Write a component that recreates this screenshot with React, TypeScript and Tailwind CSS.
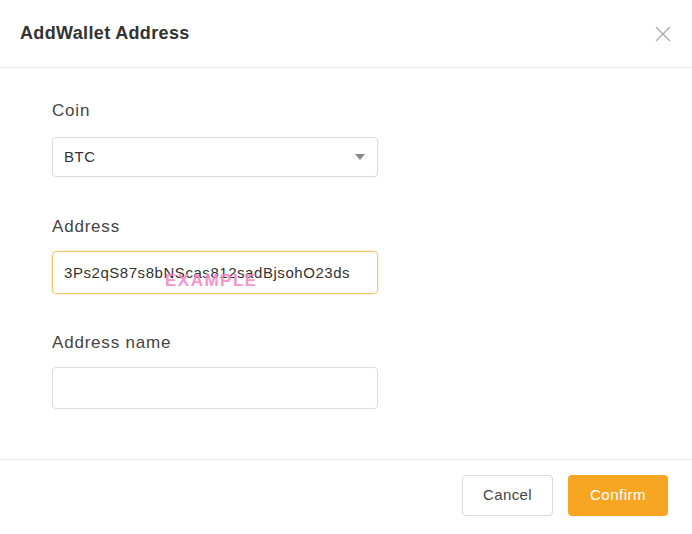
import React, { useState } from "react";

const App = () => {
  const [coin] = useState("BTC");
  const [address, setAddress] = useState("3Ps2qS87s8bNScas812sadBjsohO23ds");
  const [name, setName] = useState("");

  return (
    <div className="w-[692px] h-[534px] bg-white flex flex-col font-['Liberation_Sans',Arial,sans-serif] text-[#333]">
      {/* header */}
      <div className="h-[68px] flex items-center justify-between pl-5 pr-[21px] border-b border-[#e8e8e8]">
        <h2 className="text-[18px] font-bold tracking-[0.35px] text-[#333]">AddWallet Address</h2>
        <button type="button" className="text-[#aaa]">
          <svg width="16" height="16" viewBox="0 0 16 16" fill="none" stroke="currentColor" strokeWidth="1.3">
            <path d="M1 1 L15 15 M15 1 L1 15" />
          </svg>
        </button>
      </div>

      {/* body */}
      <div className="flex-1 pt-[31px] pl-[52px]">
        <label className="block text-[17px] tracking-[0.8px] leading-6 text-[#444] mb-[14px]">Coin</label>
        <div className="relative w-[326px] h-[40px] border border-[#dcdcdc] rounded-[4px] flex items-center pl-[11px] shadow-[0_1px_2px_rgba(0,0,0,0.05)]">
          <span className="text-[15px] tracking-[0.6px] text-[#333]">{coin}</span>
          <svg className="absolute right-[12px] top-[16px]" width="10" height="7" viewBox="0 0 10 7">
            <path d="M0 0 H10 L5 6 Z" fill="#8a8a8a" />
          </svg>
        </div>

        <label className="block text-[17px] tracking-[0.8px] leading-6 text-[#444] mt-[38px] mb-[12px]">Address</label>
        <div className="relative w-[326px]">
          <input
            value={address}
            onChange={(e) => setAddress(e.target.value)}
            className="w-full h-[43px] border border-[#f2c56a] rounded-[4px] pl-[11px] text-[15px] tracking-[0.55px] text-[#333] outline-none shadow-[0_0_3px_rgba(245,166,35,0.35)]"
          />
          <span className="absolute left-[113px] top-[17px] text-[17px] font-bold tracking-[1.5px] text-[#f58ac8] opacity-90 pointer-events-none">
            EXAMPLE
          </span>
        </div>

        <label className="block text-[17px] tracking-[0.8px] leading-6 text-[#444] mt-[37px] mb-[12px]">Address name</label>
        <input
          value={name}
          onChange={(e) => setName(e.target.value)}
          className="w-[326px] h-[42px] border border-[#dcdcdc] rounded-[4px] pl-[11px] text-[15px] outline-none"
        />
      </div>

      {/* footer */}
      <div className="h-[75px] border-t border-[#e8e8e8] flex items-start justify-end gap-[15px] pt-[15px] pr-[24px]">
        <button
          type="button"
          className="w-[91px] h-[41px] border border-[#d9d9d9] rounded-[4px] bg-white text-[15px] tracking-[0.4px] text-[#444]"
        >
          Cancel
        </button>
        <button
          type="button"
          className="w-[100px] h-[41px] rounded-[4px] bg-[#f6a623] text-[15px] tracking-[0.5px] text-white"
        >
          Confirm
        </button>
      </div>
    </div>
  );
};

export default App;
